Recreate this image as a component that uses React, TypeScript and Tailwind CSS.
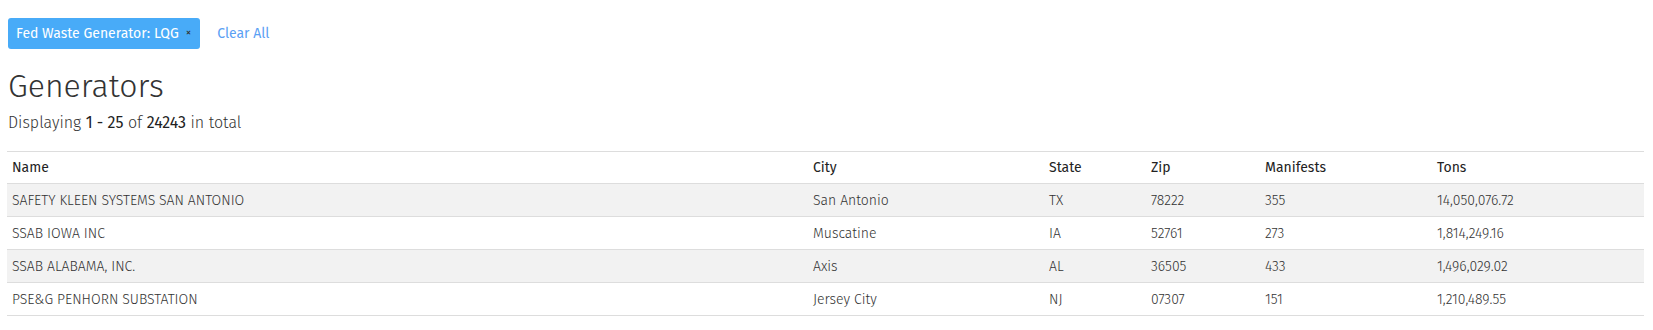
import React from "react";

const rows = [
  ["SAFETY KLEEN SYSTEMS SAN ANTONIO", "San Antonio", "TX", "78222", "355", "14,050,076.72"],
  ["SSAB IOWA INC", "Muscatine", "IA", "52761", "273", "1,814,249.16"],
  ["SSAB ALABAMA, INC.", "Axis", "AL", "36505", "433", "1,496,029.02"],
  ["PSE&G PENHORN SUBSTATION", "Jersey City", "NJ", "07307", "151", "1,210,489.55"],
];

const widths = ["w-[801px]", "w-[236px]", "w-[102px]", "w-[114px]", "w-[172px]", ""];
const heads = ["Name", "City", "State", "Zip", "Manifests", "Tons"];

export default function App() {
  return (
    <div className="pl-[7px] pr-[9px] pt-[18px] font-['Fira_Sans','Lato',sans-serif] text-[#333]">
      <div className="flex items-center pl-[1px]">
        <span className="flex h-[31px] items-center rounded-[3px] bg-[#48abf8] pl-[8px] pr-[9px] text-[14px] text-white">
          Fed Waste Generator: LQG
          <span className="ml-[7px] text-[11px] text-[#333]">×</span>
        </span>
        <span className="ml-[17px] text-[14px] text-[#5aa0f4]">Clear All</span>
      </div>
      <h1 className="mt-[15px] pl-[1px] text-[32px] font-light leading-[44px] text-[#333]">Generators</h1>
      <p className="mt-[5px] pl-[1px] text-[16px] font-light leading-[20px]">
        Displaying <span className="font-normal text-[#222]">1 - 25</span> of{" "}
        <span className="font-normal text-[#222]">24243</span> in total
      </p>
      <table className="mt-[18px] w-full border-collapse text-[14px]">
        <thead>
          <tr className="h-[32px] border-t border-b border-[#ddd]">
            {heads.map((h, i) => (
              <th key={h} className={`${widths[i]} px-[5px] text-left font-normal text-[#222]`}>
                {h}
              </th>
            ))}
          </tr>
        </thead>
        <tbody>
          {rows.map((r, ri) => (
            <tr key={ri} className={`h-[33px] border-b border-[#ddd] ${ri % 2 === 0 ? "bg-[#f2f2f2]" : ""}`}>
              {r.map((c, ci) => (
                <td key={ci} className="px-[5px] font-light">
                  {c}
                </td>
              ))}
            </tr>
          ))}
        </tbody>
      </table>
    </div>
  );
}
